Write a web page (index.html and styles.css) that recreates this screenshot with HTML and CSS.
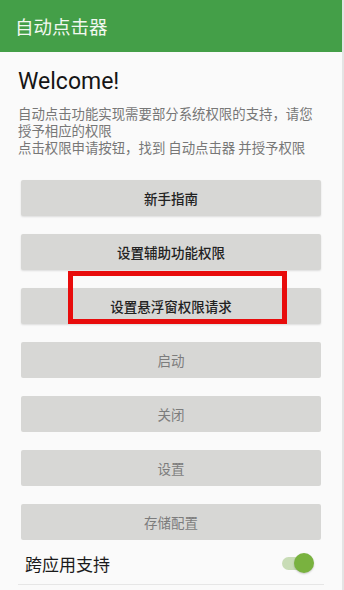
FILE: index.html
```html
<!DOCTYPE html>
<html lang="zh">
<head>
<meta charset="utf-8">
<link rel="stylesheet" href="styles.css">
</head>
<body>
<div class="app">
  <header class="toolbar"><span class="title">自动点击器</span></header>
  <main class="content">
    <h1 class="welcome">Welcome!</h1>
    <p class="desc">自动点击功能实现需要部分系统权限的支持，请您授予相应的权限<br>点击权限申请按钮，找到 自动点击器 并授予权限</p>
    <div class="buttons">
      <div class="btn">新手指南</div>
      <div class="btn">设置辅助功能权限</div>
      <div class="btn">设置悬浮窗权限请求</div>
      <div class="btn disabled">启动</div>
      <div class="btn disabled">关闭</div>
      <div class="btn disabled">设置</div>
      <div class="btn disabled">存储配置</div>
    </div>
    <div class="switch-row">
      <span class="switch-label">跨应用支持</span>
      <span class="switch"><span class="track"></span><span class="thumb"></span></span>
    </div>
  </main>
  <div class="highlight"></div>
</div>
</body>
</html>
```
FILE: styles.css
```css
html, body { margin: 0; padding: 0; }
body {
  background: #fafafa;
  font-family: "Noto Sans CJK SC", Roboto, sans-serif;
  width: 344px;
  height: 590px;
  overflow: hidden;
}
.app {
  position: relative;
  width: 344px;
  height: 590px;
  box-sizing: border-box;
  border-right: 2px solid #e4e4e4;
}
.toolbar {
  height: 52px;
  background: #449f48;
  display: flex;
  align-items: center;
  padding-left: 15px;
}
.title {
  color: #f2f8f0;
  font-size: 18.5px;
}
.content {
  padding: 0 18px;
}
.welcome {
  margin: 16px 0 0 0;
  font-family: Roboto, "Noto Sans CJK SC", sans-serif;
  font-weight: 400;
  font-size: 23px;
  line-height: 28px;
  color: #151515;
}
.desc {
  margin: 9px 0 0 0;
  font-size: 13.4px;
  line-height: 17px;
  color: #777;
}
.buttons {
  margin: 24px 3px 0 3px;
  display: flex;
  flex-direction: column;
  gap: 18px;
}
.btn {
  height: 36px;
  background: #d7d7d5;
  border-radius: 2px;
  box-shadow: 0 1px 2px rgba(0,0,0,0.12);
  display: flex;
  align-items: center;
  justify-content: center;
  font-size: 13.5px;
  font-weight: 500;
  color: #222;
}
.btn.disabled {
  font-weight: 400;
  color: #7c7c7c;
  box-shadow: none;
}
.switch-row {
  margin-top: 2px;
  height: 42px;
  display: flex;
  align-items: center;
  justify-content: space-between;
  padding: 0 10px 0 7px;
  border-bottom: 1px solid #e6e6e6;
}
.switch-label {
  font-size: 17px;
  color: #1a1a1a;
}
.switch {
  position: relative;
  width: 32px;
  height: 20px;
}
.track {
  position: absolute;
  left: 0;
  top: 4px;
  width: 30px;
  height: 13px;
  border-radius: 7px;
  background: #c8dcb6;
}
.thumb {
  position: absolute;
  right: 0;
  top: 0;
  width: 20px;
  height: 20px;
  border-radius: 50%;
  background: #79b23f;
  box-shadow: 0 1px 2px rgba(0,0,0,0.2);
}
.highlight {
  position: absolute;
  left: 68px;
  top: 271px;
  width: 219px;
  height: 53px;
  box-sizing: border-box;
  border: 5px solid #e80c0c;
}
```
